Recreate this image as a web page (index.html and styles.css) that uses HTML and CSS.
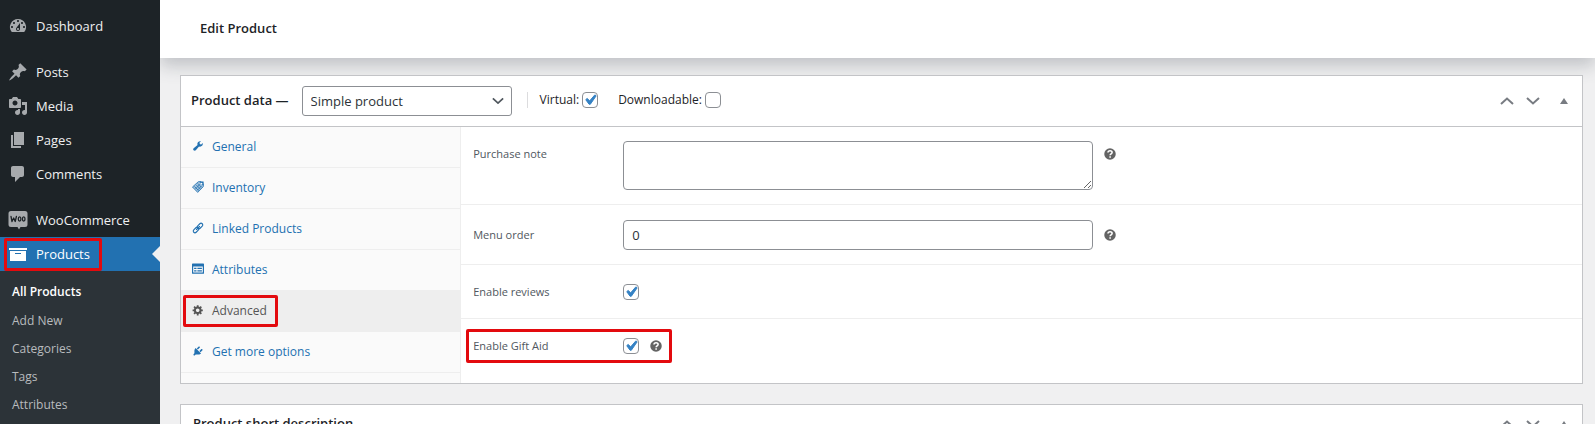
FILE: index.html
```html
<!DOCTYPE html>
<html lang="en">
<head>
<meta charset="utf-8">
<title>Edit Product</title>
<link rel="stylesheet" href="styles.css">
</head>
<body>
<svg class="sprite" aria-hidden="true">
  <symbol id="i-help" viewBox="0 0 20 20"><circle cx="10" cy="10" r="9.6"/><path d="M6.6 7.6c.2-4 7-4 6.900 0 0 2.300-3.300 2.400-3.300 4.500M10.200 13.700v2.600" fill="none" stroke="#fff" stroke-width="2.600"/></symbol>
  <symbol id="i-up" viewBox="0 0 14 8"><path d="M1 7l6-5.500L13 7" fill="none" stroke="currentColor" stroke-width="2"/></symbol>
  <symbol id="i-down" viewBox="0 0 14 8"><path d="M1 1l6 5.500L13 1" fill="none" stroke="currentColor" stroke-width="2"/></symbol>
  <symbol id="i-tri" viewBox="0 0 8 6"><path d="M4 0l4 6H0z"/></symbol>
</svg>
<div class="app">
  <nav class="menu" aria-label="Main menu">
    <a class="item" href="#"><svg class="ico" viewBox="0 0 20 20"><path d="M3.760 16h12.480A7.998 7.998 0 0 0 10 3a7.998 7.998 0 0 0-6.240 13zM10 4c.55 0 1 .45 1 1s-.45 1-1 1-1-.45-1-1 .45-1 1-1zM6 6c.55 0 1 .45 1 1s-.45 1-1 1-1-.45-1-1 .45-1 1-1zm8 0c.55 0 1 .45 1 1s-.45 1-1 1-1-.45-1-1 .45-1 1-1zm-5.370 5.550L12 7v6c0 1.100-.9 2-2 2s-2-.9-2-2c0-.57.24-1.080.63-1.450zM4 10c.55 0 1 .45 1 1s-.45 1-1 1-1-.45-1-1 .45-1 1-1zm12 0c.55 0 1 .45 1 1s-.45 1-1 1-1-.45-1-1 .45-1 1-1zm-5 3c0-.55-.45-1-1-1s-1 .45-1 1 .45 1 1 1 1-.45 1-1z"/></svg>Dashboard</a>
    <a class="item gap" href="#"><svg class="ico" viewBox="0 0 20 20"><path d="M10.440 3.020l1.820-1.820 6.360 6.350-1.830 1.820c-1.050-.68-2.480-.57-3.410.36l-.75.75c-.92.93-1.040 2.350-.35 3.410l-1.830 1.820-2.410-2.410-2.800 2.790c-.42.42-3.380 2.710-3.800 2.290s1.860-3.390 2.280-3.810l2.790-2.790L4.100 9.360l1.830-1.820c1.050.69 2.480.57 3.400-.36l.75-.75c.93-.92 1.050-2.350.36-3.410z"/></svg>Posts</a>
    <a class="item" href="#"><svg class="ico" viewBox="0 0 20 20"><path d="M13 11V4c0-.55-.45-1-1-1h-1.670L9 1H5L3.670 3H2c-.55 0-1 .45-1 1v7c0 .55.45 1 1 1h10c.55 0 1-.45 1-1zM7 4.500c1.380 0 2.500 1.120 2.500 2.500S8.380 9.500 7 9.500 4.500 8.380 4.500 7 5.620 4.500 7 4.500zM14 6h5v10.500c0 1.380-1.120 2.500-2.500 2.500S14 17.880 14 16.500s1.120-2.500 2.500-2.500c.17 0 .34.02.5.05V9h-3V6zm-4 8.050V13h2v3.500c0 1.380-1.120 2.500-2.500 2.500S7 17.880 7 16.500 8.120 14 9.500 14c.17 0 .34.02.5.05z"/></svg>Media</a>
    <a class="item" href="#"><svg class="ico" viewBox="0 0 20 20"><path d="M6 15V2h10v13H6zm-1 1h8v2H3V5h2v11z"/></svg>Pages</a>
    <a class="item" href="#"><svg class="ico" viewBox="0 0 20 20"><path d="M5 2h9c1.100 0 2 .9 2 2v7c0 1.100-.9 2-2 2h-2l-5 5v-5H5c-1.100 0-2-.9-2-2V4c0-1.100.9-2 2-2z"/></svg>Comments</a>
    <a class="item gap" href="#"><svg class="ico" viewBox="0 0 20 20"><path d="M3 1h14a2.500 2.500 0 0 1 2.500 2.500v11A2.500 2.500 0 0 1 17 17h-4.500L11 19.500 9.500 17H3a2.500 2.500 0 0 1-2.500-2.500v-11A2.500 2.500 0 0 1 3 1z"/><g fill="none" stroke="#1d2327" stroke-width="1.300" stroke-linejoin="round" stroke-linecap="round"><path d="M3 6.500l1 5 1.700-3.500L7.200 11.500l1.200-5"/><ellipse cx="11.600" cy="9" rx="1.300" ry="2.100"/><ellipse cx="15.700" cy="9" rx="1.300" ry="2.100"/></g></svg>WooCommerce</a>
    <a class="item current" href="#" aria-current="page"><svg class="ico" viewBox="0 0 20 20"><path d="M19 4v2H1V4h18zM2 7h16v10H2V7zm11 3V9H7v1h6z"/></svg>Products</a>
    <div class="submenu">
      <a class="on" href="#">All Products</a>
      <a href="#">Add New</a>
      <a href="#">Categories</a>
      <a href="#">Tags</a>
      <a href="#">Attributes</a>
    </div>
  </nav>
  <div class="page">
    <header class="top"><h1>Edit Product</h1></header>
    <main class="content">
      <section class="box">
        <div class="box-head">
          <h2>Product data —</h2>
          <div class="select">
            <select aria-label="Product type"><option>Simple product</option></select>
            <svg class="chev" viewBox="0 0 14 8"><use href="#i-down"/></svg>
          </div>
          <div class="types">
            <label>Virtual:<input type="checkbox" checked></label>
            <label>Downloadable:<input type="checkbox"></label>
          </div>
          <div class="actions">
            <button type="button" aria-label="Move up"><svg class="arrow" viewBox="0 0 14 8"><use href="#i-up"/></svg></button>
            <button type="button" aria-label="Move down"><svg class="arrow" viewBox="0 0 14 8"><use href="#i-down"/></svg></button>
            <button type="button" aria-label="Toggle panel"><svg class="tri" viewBox="0 0 8 6"><use href="#i-tri"/></svg></button>
          </div>
        </div>
        <div class="box-body">
          <nav class="tabs" aria-label="Product data">
            <a href="#"><svg class="tico" viewBox="0 0 20 20"><path d="M16.680 9.770c-1.340 1.340-3.300 1.670-4.950.99l-5.410 6.520c-.99.99-2.590.99-3.580 0s-.99-2.590 0-3.570l6.520-5.420c-.68-1.650-.35-3.610.99-4.950 1.280-1.280 3.120-1.620 4.720-1.060l-2.890 2.890 2.820 2.820 2.860-2.870c.53 1.580.18 3.390-1.080 4.650z"/></svg>General</a>
            <a href="#"><svg class="tico" viewBox="0 0 20 20"><path d="M10.500 1L19 1.500 19 9 9.500 19 .5 10z" fill-opacity=".4"/><path d="M10.500 1.200L.8 10l8.700 9 9.300-9.500V5L15 1.200zM4 9l7 7M7 6.500l7 7M9.500 4l6.500 6.500M6 13l7-7.500M9 15.500l7-7.500" fill="none" stroke="currentColor" stroke-width="1.300"/><path d="M12 .8h7.300V8z"/><circle cx="16" cy="4.200" r="1.300" fill="#fff"/></svg>Inventory</a>
            <a href="#"><svg class="tico" viewBox="0 0 20 20"><g fill="none" stroke="currentColor" stroke-width="1.900" stroke-linecap="round"><rect x="-5.300" y="-2.800" width="10.600" height="5.600" rx="2.800" transform="translate(13.300 6.700) rotate(-45)"/><rect x="-5.300" y="-2.800" width="10.600" height="5.600" rx="2.800" transform="translate(6.700 13.300) rotate(-45)"/><path d="M7.500 12.500l5-5"/></g></svg>Linked Products</a>
            <a href="#"><svg class="tico" viewBox="0 0 20 20"><path d="M1 1h18c.55 0 1 .45 1 1v15c0 .55-.45 1-1 1H1c-.55 0-1-.45-1-1V2c0-.55.45-1 1-1zm17 15V6H2v10zM3.500 8v2h4V8zM9 8v2h7.500V8zm-5.500 4v2h4v-2zM9 12v2h7.500v-2z" fill-rule="evenodd"/></svg>Attributes</a>
            <a class="active" href="#" aria-current="true"><svg class="tico" viewBox="0 0 20 20"><path d="M18 12h-2.180c-.17.7-.44 1.350-.81 1.930l1.540 1.540-2.100 2.100-1.540-1.540c-.58.36-1.230.63-1.910.79V19H8v-2.180c-.68-.16-1.330-.43-1.910-.79l-1.540 1.540-2.120-2.120 1.540-1.540c-.36-.58-.63-1.230-.79-1.910H1V9.030h2.170c.16-.7.44-1.350.8-1.940L2.430 5.550l2.100-2.100 1.540 1.540c.58-.37 1.240-.64 1.930-.81V2h3v2.180c.68.16 1.330.43 1.910.79l1.540-1.540 2.120 2.120-1.540 1.540c.36.59.64 1.240.8 1.940H18V12zm-8.500 1.500c1.660 0 3-1.340 3-3s-1.340-3-3-3-3 1.340-3 3 1.340 3 3 3z"/></svg>Advanced</a>
            <a href="#"><svg class="tico" viewBox="0 0 20 20"><path d="M13.110 4.360L9.870 7.600 8 5.730l3.240-3.240c.35-.34 1.050-.2 1.560.32.52.51.66 1.210.31 1.550zm-8 1.770l.91-1.120 9.010 9.010-1.190.84c-.71.71-2.630 1.160-3.820 1.160H6.140L4.900 17.260c-.59.59-1.540.59-2.120 0-.59-.58-.59-1.530 0-2.120l1.240-1.240v-3.880c0-1.130.4-3.190 1.090-3.890zm7.260 3.970l3.240-3.240c.34-.35 1.040-.21 1.550.31.52.51.66 1.210.31 1.550l-3.240 3.250z"/></svg>Get more options</a>
          </nav>
          <form class="panel">
            <div class="row first">
              <label for="note">Purchase note</label>
              <div class="field"><textarea id="note" rows="2"></textarea><svg class="help" viewBox="0 0 20 20"><use href="#i-help"/></svg></div>
            </div>
            <div class="row">
              <label for="order">Menu order</label>
              <div class="field"><input class="text" id="order" type="text" value="0"><svg class="help" viewBox="0 0 20 20"><use href="#i-help"/></svg></div>
            </div>
            <div class="row check">
              <label for="reviews">Enable reviews</label>
              <div class="field"><input id="reviews" type="checkbox" checked></div>
            </div>
            <div class="row check marked">
              <label for="gift">Enable Gift Aid</label>
              <div class="field"><input id="gift" type="checkbox" checked><svg class="help" viewBox="0 0 20 20"><use href="#i-help"/></svg></div>
            </div>
          </form>
        </div>
      </section>
      <section class="box">
        <div class="box-head slim">
          <h2>Product short description</h2>
          <div class="actions">
            <button type="button" aria-label="Move up"><svg class="arrow" viewBox="0 0 14 8"><use href="#i-up"/></svg></button>
            <button type="button" aria-label="Move down"><svg class="arrow" viewBox="0 0 14 8"><use href="#i-down"/></svg></button>
            <button type="button" aria-label="Toggle panel"><svg class="tri" viewBox="0 0 8 6"><use href="#i-tri"/></svg></button>
          </div>
        </div>
      </section>
    </main>
  </div>
</div>
</body>
</html>
```
FILE: styles.css
```css
*, *::before, *::after { box-sizing: border-box; }
html, body { height: 100%; }
body {
  margin: 0;
  overflow: hidden;
  background: #f0f0f1;
  color: #1d2327;
  font: 13px/20px "Open Sans", "Noto Sans", sans-serif;
}
h1, h2 { margin: 0; font-size: 13px; line-height: 20px; font-weight: 600; }
a { text-decoration: none; }
svg { display: block; flex: none; fill: currentColor; }
.sprite { position: absolute; width: 0; height: 0; }

.app { display: flex; height: 100vh; }

/* Admin menu */
.menu {
  flex: none;
  display: flex;
  flex-direction: column;
  width: 160px;
  padding-top: 9px;
  background: #1d2327;
}
.item {
  position: relative;
  display: flex;
  flex: none;
  align-items: center;
  gap: 8px;
  height: 34px;
  padding-left: 8px;
  color: #f0f0f1;
}
.item.gap { margin-top: 12px; }
.ico { width: 20px; height: 20px; color: #a7aaad; }
.item.current { background: #2271b1; color: #fff; }
.item.current .ico { color: #fff; }
.item.current::before {
  content: "";
  position: absolute;
  right: 0;
  top: 9px;
  border: 8px solid transparent;
  border-left-width: 0;
  border-right-color: #f0f0f1;
}
.item.current::after,
.tabs .active::after,
.marked::after {
  content: "";
  position: absolute;
  border: 3px solid #e30a0e;
  border-radius: 2px;
  pointer-events: none;
}
.item.current::after { left: 4px; top: 1px; width: 98px; height: 33px; }
.submenu {
  flex: 1;
  padding: 7px 0;
  background: #2c3338;
  font-size: 12px;
}
.submenu a {
  display: block;
  padding: 4px 12px;
  color: #b8bbbe;
}
.submenu a.on { padding-bottom: 5px; color: #fff; font-weight: 600; }

/* Page */
.page { flex: 1; min-width: 0; overflow: hidden; }
.top {
  padding: 18px 40px 20px;
  background: #fff;
  box-shadow: 0 8px 16px 0 rgba(85, 93, 102, 0.3);
}
.content {
  display: flex;
  flex-direction: column;
  gap: 20px;
  padding: 17px 12px 0 20px;
}
.box { border: 1px solid #c3c4c7; background: #fff; }
.box-head {
  display: flex;
  align-items: center;
  min-height: 51px;
  padding: 0 14px 0 10px;
  border-bottom: 1px solid #c3c4c7;
}
.box-head h2, .types { margin-bottom: 2px; }
.box-head.slim { min-height: 38px; padding-left: 12px; }
.select { position: relative; margin-left: 13px; width: 210px; }
.select select {
  appearance: none;
  display: block;
  width: 100%;
  height: 30px;
  padding: 0 24px 0 8px;
  border: 1px solid #8c8f94;
  border-radius: 3px;
  background: #fff;
  color: #2c3338;
  font: inherit;
}
.chev { position: absolute; right: 8px; top: 11px; width: 12px; height: 8px; color: #50575e; }
.types {
  display: flex;
  gap: 20px;
  margin-left: 15px;
  padding-left: 12px;
  border-left: 1px solid #dcdcde;
  font-size: 12px;
  line-height: 16px;
}
.types label { display: flex; align-items: center; gap: 3px; }
.actions { display: flex; align-items: center; margin-left: auto; color: #787c82; }
.actions button {
  display: flex;
  justify-content: center;
  width: 26px;
  padding: 0;
  border: 0;
  background: none;
  color: inherit;
}
.actions button:last-child { width: 8px; margin-left: 14px; }
.arrow { width: 14px; height: 8px; }
.tri { width: 8px; height: 6px; }

input[type="checkbox"] {
  appearance: none;
  flex: none;
  width: 16px;
  height: 16px;
  margin: 0;
  border: 1px solid #8c8f94;
  border-radius: 4px;
  background: #fff;
}
input[type="checkbox"]:checked {
  background: #fff url("data:image/svg+xml,%3Csvg xmlns='http://www.w3.org/2000/svg' viewBox='0 0 20 20'%3E%3Cpath d='M14.830 4.890l1.340.94-5.810 8.380H9.020L5.780 9.670l1.340-1.250 2.570 2.400z' fill='%233582c4' stroke='%233582c4'/%3E%3C/svg%3E") center / 20px 20px no-repeat;
}

.box-body { display: flex; }
.tabs {
  width: 20%;
  padding-bottom: 10px;
  border-right: 1px solid #eee;
  background: #fafafa;
  font-size: 12px;
}
.tabs a {
  position: relative;
  display: flex;
  align-items: center;
  gap: 8px;
  height: 41px;
  padding-left: 11px;
  border-bottom: 1px solid #eee;
  color: #2271b1;
}
.tico { width: 12px; height: 12px; margin-bottom: 3px; }
.tabs .active { background: #eee; color: #555; }
.tabs .active::after { left: 2px; top: 4px; width: 95px; height: 32px; }

.panel { flex: 1; font-size: 11px; color: #50575e; }
.row {
  position: relative;
  display: grid;
  grid-template-columns: 150px 1fr;
  align-items: center;
  min-height: 60px;
  padding: 0 20px 0 12px;
  border-bottom: 1px solid #eee;
}
.row.first { min-height: 78px; align-items: start; padding-top: 14px; }
.row.first label { padding-top: 3px; }
.row.check { min-height: 54px; }
.row.marked { border-bottom: 0; }
.marked::after { left: 5px; top: 10px; width: 206px; height: 34px; }
.field { display: flex; align-items: center; gap: 11px; }
.row.first .field { align-items: flex-start; }
.row.first .help { margin-top: 7px; }
.help { width: 12px; height: 12px; color: #646464; }
textarea, .text {
  display: block;
  width: 50%;
  margin: 0;
  border: 1px solid #8c8f94;
  border-radius: 4px;
  background: #fff;
  color: #2c3338;
  font: 13px/20px "Open Sans", "Noto Sans", sans-serif;
}
textarea { height: 49px; padding: 2px 6px; }
.text { height: 30px; padding: 0 8px; }
```
